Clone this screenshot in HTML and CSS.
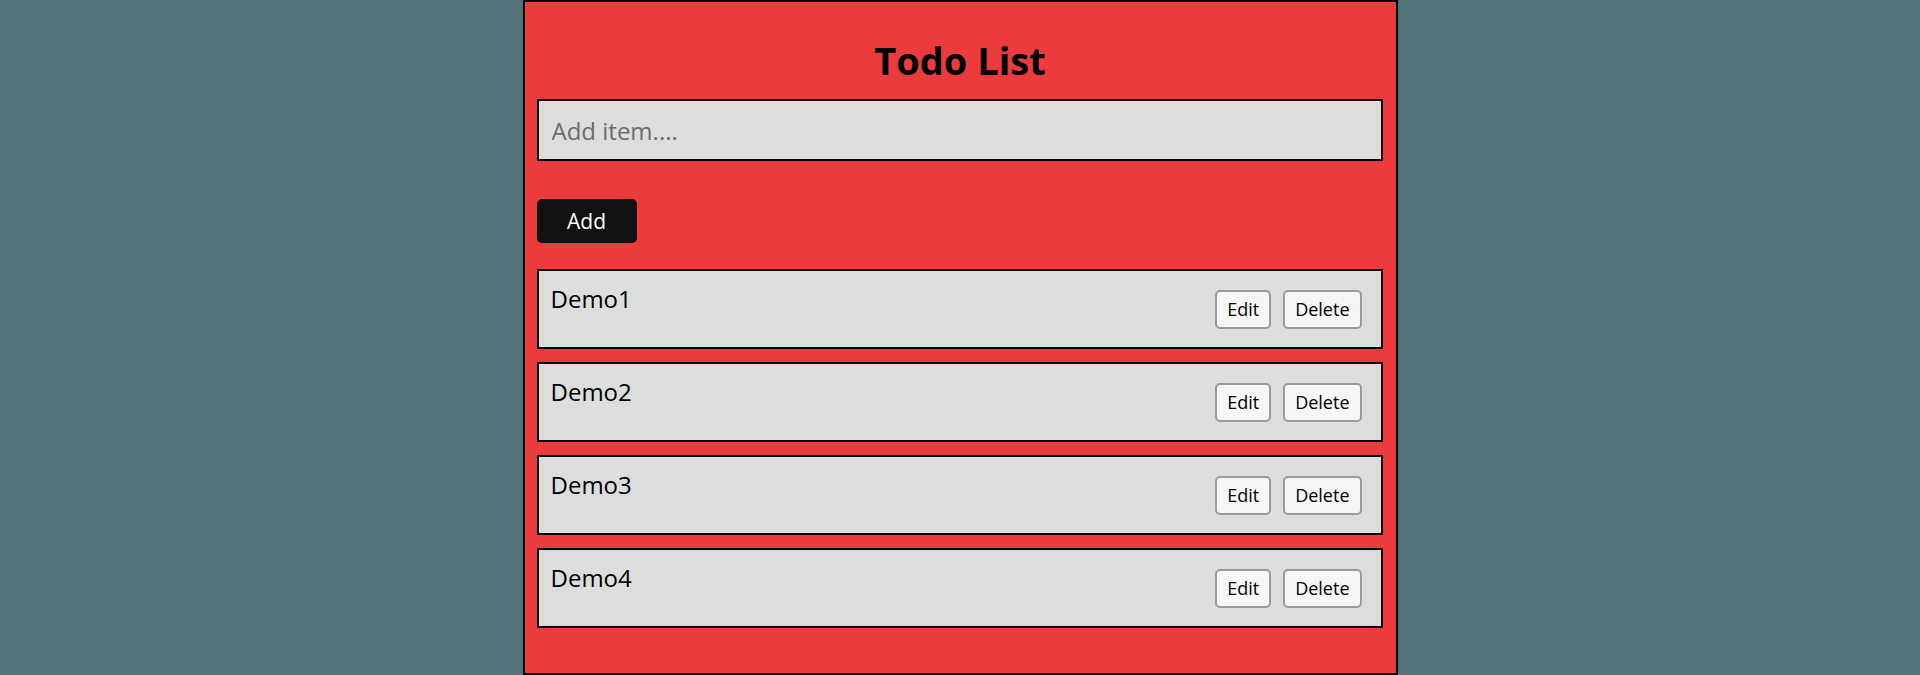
FILE: index.html
```html
<!DOCTYPE html>
<html lang="en">
<head>
<meta charset="utf-8">
<title>Todo List</title>
<link rel="stylesheet" href="styles.css">
</head>
<body>
<div class="app">
  <h1 class="title">Todo List</h1>
  <input class="new-item" type="text" placeholder="Add item....">
  <button class="add-btn">Add</button>
  <ul class="list">
    <li class="item"><span class="item-text">Demo1</span><div class="actions"><button class="act">Edit</button><button class="act">Delete</button></div></li>
    <li class="item"><span class="item-text">Demo2</span><div class="actions"><button class="act">Edit</button><button class="act">Delete</button></div></li>
    <li class="item"><span class="item-text">Demo3</span><div class="actions"><button class="act">Edit</button><button class="act">Delete</button></div></li>
    <li class="item"><span class="item-text">Demo4</span><div class="actions"><button class="act">Edit</button><button class="act">Delete</button></div></li>
  </ul>
</div>
</body>
</html>
```

FILE: styles.css
```css
* { box-sizing: border-box; }
html, body { margin: 0; padding: 0; }
body {
  background: #527478;
  font-family: "Open Sans", "Noto Sans", sans-serif;
  color: #000;
}
.app {
  width: 875px;
  height: 675px;
  margin: 0 auto;
  background: #eb3b3c;
  border: 2px solid #000;
  padding: 0 12px;
  display: flex;
  flex-direction: column;
  align-items: flex-start;
}
.title {
  align-self: stretch;
  text-align: center;
  font-size: 38px;
  line-height: 54px;
  font-weight: 700;
  margin: 31px 0 12px;
}
.new-item {
  width: 846px;
  height: 62px;
  border: 2px solid #000;
  background: #dcdedd;
  font-family: inherit;
  font-size: 24px;
  padding: 0 13px;
  outline: none;
}
.new-item::placeholder { color: #6b6b6b; }
.add-btn {
  margin-top: 38px;
  width: 100px;
  height: 44px;
  background: #111;
  color: #fff;
  border: none;
  border-radius: 5px;
  font-family: inherit;
  font-size: 21px;
}
.list {
  list-style: none;
  margin: 26px 0 0;
  padding: 0;
  width: 846px;
  display: flex;
  flex-direction: column;
  gap: 13px;
}
.item {
  height: 80px;
  border: 2px solid #000;
  background: #dcdedd;
  display: flex;
  align-items: center;
  justify-content: space-between;
  padding: 0 19px 0 12px;
}
.item-text {
  align-self: flex-start;
  padding-top: 12px;
  font-size: 24px;
  line-height: 32px;
}
.actions {
  display: flex;
  gap: 12px;
}
.act {
  height: 39px;
  padding: 0 10px;
  background: #f6f6f6;
  border: 2px solid #9a9a9a;
  border-radius: 5px;
  font-family: inherit;
  font-size: 18px;
  color: #000;
}
```
